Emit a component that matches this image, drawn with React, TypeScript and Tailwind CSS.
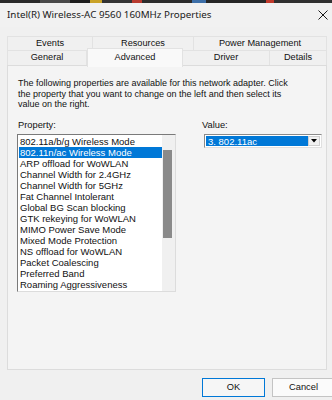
import React from "react";

const items = [
  "802.11a/b/g Wireless Mode",
  "802.11n/ac Wireless Mode",
  "ARP offload for WoWLAN",
  "Channel Width for 2.4GHz",
  "Channel Width for 5GHz",
  "Fat Channel Intolerant",
  "Global BG Scan blocking",
  "GTK rekeying for WoWLAN",
  "MIMO Power Save Mode",
  "Mixed Mode Protection",
  "NS offload for WoWLAN",
  "Packet Coalescing",
  "Preferred Band",
  "Roaming Aggressiveness",
];

export default function App() {
  const sans = { fontFamily: '"Liberation Sans", Arial, sans-serif' };
  return (
    <div
      className="w-[332px] h-[400px] bg-[#f0f0f0] overflow-hidden flex flex-col text-black"
      style={sans}
    >
      {/* desktop strip behind */}
      <div className="h-[3px] flex shrink-0">
        <div className="w-[40px] bg-[#2a2a2a]" />
        <div className="w-[30px] bg-[#4a4a4a]" />
        <div className="w-[20px] bg-[#1e1e1e]" />
        <div className="w-[12px] bg-[#c9a227]" />
        <div className="w-[30px] bg-[#333333]" />
        <div className="w-[10px] bg-[#b83a2e]" />
        <div className="w-[50px] bg-[#2c2c2c]" />
        <div className="w-[14px] bg-[#3d6fa8]" />
        <div className="w-[60px] bg-[#262626]" />
        <div className="w-[8px] bg-[#c0392b]" />
        <div className="flex-1 bg-[#303030]" />
      </div>

      {/* title bar */}
      <div className="h-[24px] shrink-0 flex items-center justify-between pl-[7px] pr-[2px] bg-[#f1f1f1]">
        <span
          className="text-[9.8px] text-[#1a1a1a]"
          style={{ fontFamily: '"Noto Sans", "Open Sans", sans-serif' }}
        >
          Intel(R) Wireless-AC 9560 160MHz Properties
        </span>
        <svg width="12" height="12" viewBox="0 0 12 12" className="mr-[1px]">
          <path d="M1.5 1.5 L10.5 10.5 M10.5 1.5 L1.5 10.5" stroke="#1a1a1a" strokeWidth="1" />
        </svg>
      </div>

      {/* tabs */}
      <div className="mt-[9px] ml-[7px] mr-[5px] flex flex-col text-[9.2px] text-[#111]">
        <div className="flex h-[14px] border-t border-[#e2e2e2]">
          <div className="w-[86px] flex items-center justify-center border-l border-r border-[#e2e2e2]">Events</div>
          <div className="w-[101px] flex items-center justify-center border-r border-[#e2e2e2]">Resources</div>
          <div className="flex-1 flex items-center justify-center border-r border-[#e2e2e2]">Power Management</div>
        </div>
        <div className="flex h-[15px] border-t border-[#e2e2e2] relative">
          <div className="w-[80px] flex items-center justify-center border-l border-r border-[#e2e2e2]">General</div>
          <div className="w-[96px] -mt-[3px] h-[19px] z-10 flex items-start pt-[2px] justify-center bg-[#f9f9f9] border-l border-r border-t border-[#e2e2e2]">Advanced</div>
          <div className="w-[87px] flex items-center justify-center border-r border-[#e2e2e2]">Driver</div>
          <div className="flex-1 flex items-center justify-center border-r border-[#e2e2e2]">Details</div>
        </div>
      </div>

      {/* panel */}
      <div className="ml-[7px] mr-[5px] h-[305px] shrink-0 bg-[#f4f4f4] border border-[#dcdcdc] pl-[10px] pt-[12px] flex flex-col">
        <p className="text-[9px] leading-[10.5px] w-[276px] text-[#111]">
          The following properties are available for this network adapter. Click the property that you want to change on the left and then select its value on the right.
        </p>

        <div className="mt-[10px] flex">
          {/* left column */}
          <div className="flex flex-col w-[159px] -ml-[1px]">
            <div className="text-[9.3px] leading-[11px] pl-[1px] text-[#111]">Property:</div>
            <div className="mt-[3px] h-[158px] bg-white border-t border-l border-[#7a7a7a] border-r border-b border-r-[#dcdcdc] border-b-[#dcdcdc] flex overflow-hidden">
              <div className="flex-1 flex flex-col pt-[1px] pl-[1px]">
                {items.map((it, i) => (
                  <div
                    key={it}
                    className={
                      "h-[11px] leading-[11px] pl-[1px] text-[9.5px] whitespace-nowrap " +
                      (i === 1 ? "bg-[#0078d7] text-white" : "text-[#111]")
                    }
                  >
                    {it}
                  </div>
                ))}
              </div>
              <div className="w-[13px] bg-[#f0f0f0] pl-[1px] pt-[15px]">
                <div className="w-[9px] h-[88px] bg-[#8a8a8a]" />
              </div>
            </div>
          </div>

          {/* right column */}
          <div className="flex flex-col ml-[26px]">
            <div className="text-[9.3px] leading-[11px] text-[#111]">Value:</div>
            <div className="mt-[3px] ml-[2px] w-[118px] h-[14px] bg-white border-t border-l border-[#8a8a8a] border-r border-b border-r-[#e0e0e0] border-b-[#e0e0e0] flex p-[1px]">
              <div className="flex-1 bg-[#0078d7] text-white text-[9.5px] leading-[11px] pl-[2px]">3. 802.11ac</div>
              <div className="w-[12px] bg-[#f0f0f0] border border-[#cfcfcf] flex items-center justify-center">
                <svg width="6" height="4" viewBox="0 0 6 4">
                  <path d="M0 0 L6 0 L3 3.5 Z" fill="#000" />
                </svg>
              </div>
            </div>
          </div>
        </div>
      </div>

      {/* buttons */}
      <div className="mt-[8px] flex pl-[202px] gap-[7px] shrink-0">
        <div className="w-[63px] h-[19px] shrink-0 bg-[#f6f6f6] border border-[#0078d7] flex items-center justify-center text-[9.3px] text-[#111]">
          OK
        </div>
        <div className="w-[63px] h-[19px] shrink-0 bg-[#fbfbfb] border border-[#c4c4c4] flex items-center justify-center text-[9.3px] text-[#111]">
          Cancel
        </div>
      </div>
    </div>
  );
}
